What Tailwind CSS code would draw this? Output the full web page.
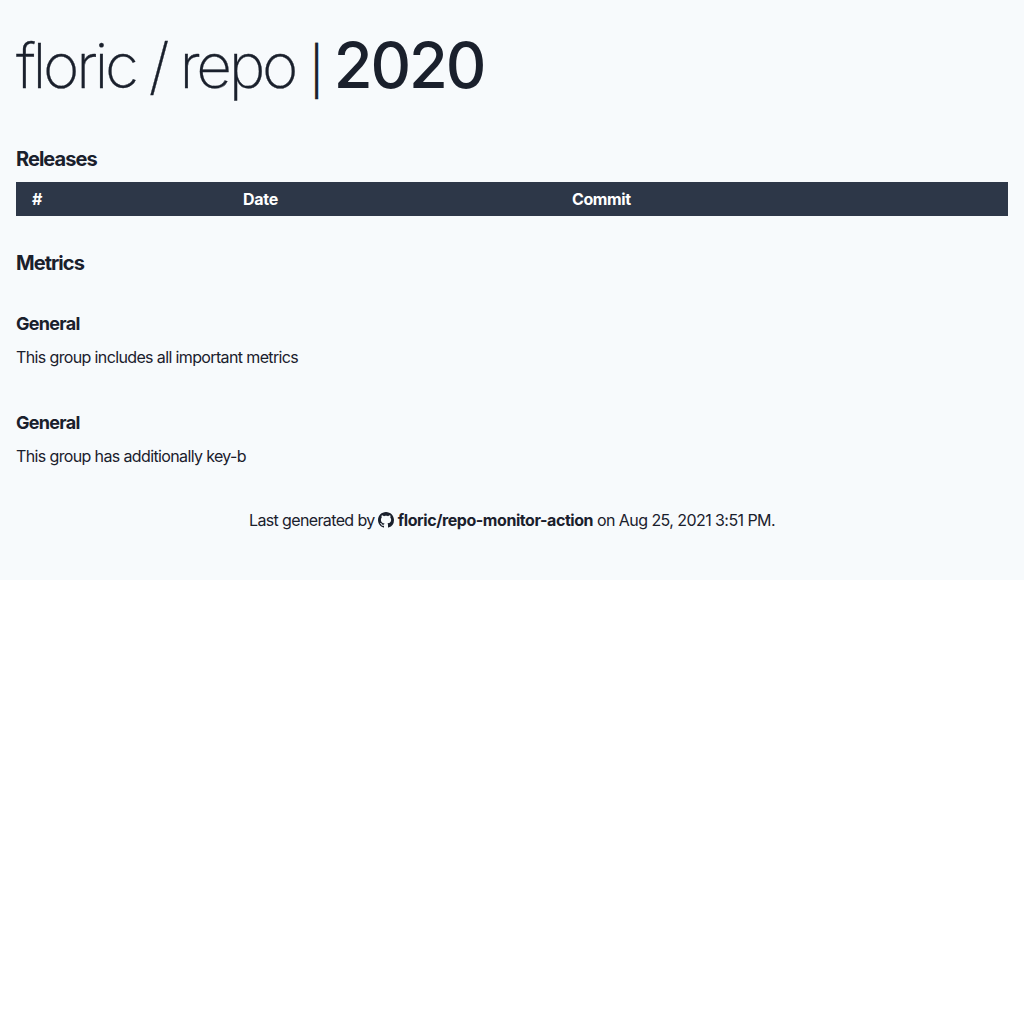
<!DOCTYPE html>
<html lang="en">
<head>
<meta charset="utf-8">
<title>floric / repo | 2020</title>
<script src="https://cdn.jsdelivr.net/npm/@tailwindcss/browser@4"></script>
</head>
<body class="bg-white font-['Inter',sans-serif] text-[#1a202c] tracking-[-0.63px]">
<div class="bg-[#f7fafc] h-[580px] px-4 pt-[34px]">
<h1 class="h-[66px] text-[62px] leading-[52px] font-extralight tracking-[-3.3px] [word-spacing:-1px] [-webkit-text-stroke:0.3px_#1a202c] whitespace-nowrap">floric / repo <span class="inline-block text-[47px] leading-none font-light ml-px">|</span> <span class="text-[63px] leading-none font-medium tracking-[-2.1px] [-webkit-text-stroke:0]">2020</span></h1>
<h2 class="mt-11 text-xl leading-[30px] font-bold tracking-[-0.95px]">Releases</h2>
<table class="mt-2 w-full table-fixed bg-[#2d3748] text-left text-white">
<thead><tr class="h-[34px]">
<th class="w-[211px] px-4 py-0 font-bold">#</th><th class="w-[329px] px-4 py-0 font-bold tracking-[-0.25px]">Date</th><th class="px-4 py-0 font-bold tracking-[-0.4px]">Commit</th>
</tr></thead>
</table>
<h2 class="mt-8 text-xl leading-[30px] font-bold tracking-[-0.95px]">Metrics</h2>
<h3 class="mt-8 text-lg leading-[27px] font-bold tracking-[-0.7px]">General</h3>
<p class="mt-2 leading-6">This group includes all important metrics</p>
<h3 class="mt-10 text-lg leading-[27px] font-bold tracking-[-0.7px]">General</h3>
<p class="mt-2 leading-6">This group has additionally key-b</p>
<p class="mt-10 text-center leading-6">Last generated by <a class="font-bold tracking-[-0.43px]"><svg class="inline-block h-4 w-4 -ml-px mr-px align-[-2px]" viewBox="0 0 16 16" fill="currentColor"><path d="M8 0C3.58 0 0 3.58 0 8c0 3.54 2.29 6.53 5.47 7.59.4.07.55-.17.55-.38 0-.19-.01-.82-.01-1.49-2.01.37-2.53-.49-2.69-.94-.09-.23-.48-.94-.82-1.13-.28-.15-.68-.52-.01-.53.63-.01 1.08.58 1.23.82.72 1.21 1.87.87 2.33.66.07-.52.28-.87.51-1.07-1.78-.2-3.64-.89-3.64-3.95 0-.87.31-1.59.82-2.15-.08-.2-.36-1.02.08-2.12 0 0 .67-.21 2.2.82.64-.18 1.32-.27 2-.27s1.36.09 2 .27c1.53-1.04 2.2-.82 2.2-.82.44 1.1.16 1.92.08 2.12.51.56.82 1.27.82 2.15 0 3.07-1.87 3.75-3.65 3.95.29.25.54.73.54 1.48 0 1.07-.01 1.93-.01 2.2 0 .21.15.46.55.38A8.01 8.01 0 0 0 16 8c0-4.42-3.58-8-8-8z"/></svg> floric/repo-monitor-action</a> <span class="tracking-[-0.57px]">on Aug 25, 2021 3:51 PM.</span></p>
</div>
</body>
</html>
